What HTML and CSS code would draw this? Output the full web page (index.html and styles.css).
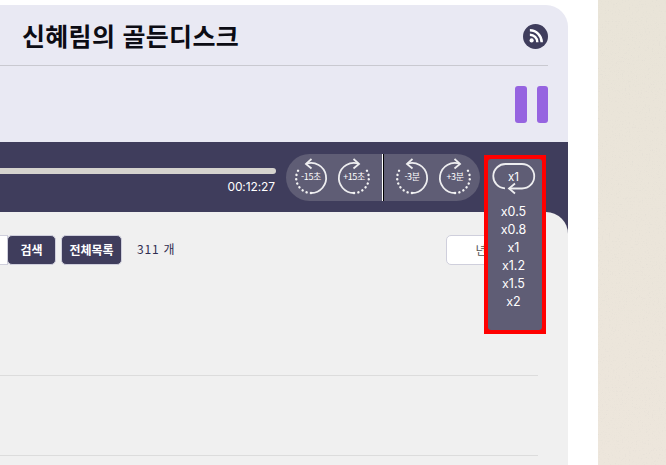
FILE: index.html
```html
<!DOCTYPE html>
<html lang="ko">
<head>
    <meta charset="UTF-8">
    <meta name="viewport" content="width=device-width, initial-scale=1.0">
    <title>신혜림의 골든디스크</title>
    <link rel="stylesheet" href="styles.css">
</head>
<body>
    <svg class="defs" width="0" height="0">
        <symbol id="ringBack" viewBox="0 0 36 40">
            <path class="ring" d="M13 7.9 A15 15 0 1 1 18 37"/>
            <path class="ring" d="M18.5 3 L13 7.9 L18.5 12.5"/>
            <path class="dots" d="M18 37 A15 15 0 0 1 7 12"/>
        </symbol>
        <symbol id="ringFwd" viewBox="0 0 36 40">
            <path class="ring" d="M23 7.9 A15 15 0 1 0 18 37"/>
            <path class="ring" d="M17.5 3 L23 7.9 L17.5 12.5"/>
            <path class="dots" d="M18 37 A15 15 0 0 0 29 12"/>
        </symbol>
        <filter id="paper">
            <feTurbulence type="fractalNoise" baseFrequency="0.7" numOctaves="2" seed="4"/>
            <feColorMatrix values="0 0 0 0 0.55  0 0 0 0 0.55  0 0 0 0 0.55  0 0 0 1.6 -0.95"/>
        </filter>
    </svg>

    <div class="page">
        <div class="panel">
            <div class="header">
                <h1 class="title">신혜림의 골든디스크</h1>
                <a class="rss">
                    <svg width="14" height="14" viewBox="0 0 16 16">
                        <circle cx="3" cy="13" r="2.4" fill="#fff"/>
                        <path d="M1 6.5 A8.5 8.5 0 0 1 9.5 15" class="rss-arc"/>
                        <path d="M1 1.5 A13.5 13.5 0 0 1 14.5 15" class="rss-arc"/>
                    </svg>
                </a>
            </div>
            <div class="now">
                <div class="pause"><span></span><span></span></div>
            </div>
            <div class="player">
                <div class="progress-wrap">
                    <div class="progress"></div>
                    <div class="time">00:12:27</div>
                </div>
                <div class="skips">
                    <div class="pill pill-left">
                        <div class="skip"><svg><use href="#ringBack"/></svg><span>-15초</span></div>
                        <div class="skip"><svg><use href="#ringFwd"/></svg><span>+15초</span></div>
                    </div>
                    <div class="pill pill-right">
                        <div class="skip"><svg><use href="#ringBack"/></svg><span>-3분</span></div>
                        <div class="skip"><svg><use href="#ringFwd"/></svg><span>+3분</span></div>
                    </div>
                </div>
                <div class="speed">
                    <div class="speed-inner">
                        <div class="speed-now">
                            <svg width="44" height="34" viewBox="0 0 44 34">
                                <path class="ring" d="M17 27.5 H30 A12.2 12.2 0 0 0 30 3 H14 A12.2 12.2 0 0 0 13 27.4"/>
                                <path class="ring" d="M23 22.5 L17 27.5 L23 32.5"/>
                            </svg>
                            <span>x1</span>
                        </div>
                        <ul class="speed-list">
                            <li>x0.5</li>
                            <li>x0.8</li>
                            <li>x1</li>
                            <li>x1.2</li>
                            <li>x1.5</li>
                            <li>x2</li>
                        </ul>
                    </div>
                </div>
            </div>
            <div class="lower">
                <div class="content">
                    <div class="toolbar">
                        <div class="search-input"></div>
                        <button class="btn btn-search">검색</button>
                        <button class="btn btn-all">전체목록</button>
                        <span class="count">311 개</span>
                        <button class="btn-year">년도별</button>
                    </div>
                    <div class="rows">
                        <div class="row"></div>
                        <div class="row"></div>
                    </div>
                </div>
            </div>
        </div>
        <div class="side">
            <svg class="paper" width="68" height="465"><rect width="68" height="465" filter="url(#paper)"/></svg>
        </div>
    </div>
</body>
</html>
```

FILE: styles.css
```css
html, body {
    margin: 0;
    height: 100%;
    overflow: hidden;
    background: #fff;
}
body {
    font-family: "Noto Sans CJK KR", "Noto Sans", sans-serif;
}
.defs {
    display: block;
    height: 0;
}
.page {
    display: flex;
    height: 465px;
}
.panel {
    width: 568px;
    margin-top: 5px;
    background: #e9e9f3;
    border-top-right-radius: 22px;
    display: flex;
    flex-direction: column;
}
.side {
    width: 68px;
    margin-left: 30px;
    background: linear-gradient(#e9e4d8, #ede6dc);
}
.paper {
    display: block;
    opacity: 0.35;
}

/* header */
.header {
    height: 60px;
    margin-right: 20px;
    padding-left: 22px;
    border-bottom: 1px solid #c9c9d0;
    display: flex;
    justify-content: space-between;
    align-items: center;
}
.title {
    margin: 0;
    font-size: 25px;
    font-weight: 700;
    letter-spacing: 0.3px;
    color: #0c0c14;
}
.rss {
    width: 25px;
    height: 25px;
    margin-top: 2px;
    border-radius: 50%;
    background: #3f3d5c;
    display: flex;
    justify-content: center;
    align-items: center;
}
.rss-arc {
    fill: none;
    stroke: #fff;
    stroke-width: 2.8;
}
.now {
    height: 76px;
    margin-right: 20px;
    display: flex;
    justify-content: flex-end;
    align-items: center;
}
.pause {
    display: flex;
    gap: 10px;
    margin-top: 1px;
}
.pause span {
    width: 11.5px;
    height: 37px;
    border-radius: 3px;
    background: #9664e0;
}

/* player bar */
.player {
    position: relative;
    height: 70px;
    background: #3f3d5c;
    display: flex;
    align-items: flex-start;
}
.progress-wrap {
    width: 276px;
    padding-top: 26px;
}
.progress {
    height: 6px;
    border-radius: 0 3px 3px 0;
    background: #d5d3ce;
}
.time {
    margin-top: 5px;
    padding-right: 1px;
    text-align: right;
    font-family: Inter, "Noto Sans", sans-serif;
    font-size: 12px;
    letter-spacing: -0.1px;
    line-height: 16px;
    color: #fff;
}
.skips {
    display: flex;
    margin: 12px 0 0 10px;
    background: linear-gradient(to right, transparent 96px, #fff 96px, #fff 97px, #000 97px, #000 98px, transparent 98px);
}
.pill {
    width: 96px;
    height: 47px;
    box-sizing: border-box;
    background: #5f5d75;
    display: flex;
    gap: 7px;
    align-items: flex-start;
}
.pill-left {
    padding: 2px 0 0 7px;
    border-radius: 24px 0 0 24px;
    margin-right: 2px;
}
.pill-right {
    padding: 2px 0 0 10px;
    border-radius: 0 24px 24px 0;
}
.skip {
    position: relative;
    width: 36px;
    height: 40px;
}
.skip svg {
    width: 36px;
    height: 40px;
    display: block;
}
.skip span {
    position: absolute;
    left: 0;
    right: 0;
    top: 15px;
    text-align: center;
    font-size: 9px;
    line-height: 12px;
    letter-spacing: -0.4px;
    color: #fff;
}
.ring {
    fill: none;
    stroke: #eeeef0;
    stroke-width: 1.8;
}
.dots {
    fill: none;
    stroke: #f2f2f2;
    stroke-width: 2.4;
    stroke-linecap: round;
    stroke-dasharray: 0.1 4.3;
}

/* speed menu */
.speed {
    position: absolute;
    left: 484px;
    top: 13px;
    z-index: 2;
    width: 62px;
    height: 179px;
    box-sizing: border-box;
    padding: 4px;
    background: #f00;
}
.speed-inner {
    height: 100%;
    padding-right: 3px;
    box-sizing: border-box;
    border-radius: 3px;
    background: #5f5d75;
    color: #fff;
    font-family: Inter, "Noto Sans", sans-serif;
    font-size: 12.5px;
    text-align: center;
}
.speed-now {
    position: relative;
    height: 44px;
    display: flex;
    justify-content: center;
    padding-top: 2px;
    box-sizing: border-box;
}
.speed-now span {
    position: absolute;
    left: 0;
    right: 0;
    top: 10px;
    font-size: 11.5px;
    line-height: 16px;
}
.speed-list {
    margin: 0;
    padding: 0;
    list-style: none;
}
.speed-list li {
    height: 18px;
    line-height: 18px;
}

/* list */
.lower {
    flex: 1;
    background: #3f3d5c;
}
.content {
    height: 100%;
    background: #f0f0f0;
    border-top-right-radius: 22px;
}
.toolbar {
    height: 30px;
    padding-top: 23px;
    margin-right: 30px;
    display: flex;
    align-items: center;
}
.search-input {
    width: 7px;
    height: 28px;
    background: #fff;
    border: 1px solid #cfcfdc;
    border-left: none;
    margin-right: -1px;
}
.btn {
    height: 30px;
    padding: 0 0 2px;
    border: 1px solid #cfcfdc;
    border-radius: 5px;
    background: #3f3d5c;
    color: #fff;
    font-family: inherit;
    font-size: 12px;
    font-weight: 700;
}
.btn-search {
    width: 49px;
}
.btn-all {
    width: 61px;
    margin-left: 5px;
}
.count {
    margin-left: 15px;
    padding-bottom: 3px;
    font-size: 12px;
    letter-spacing: 0.8px;
    color: #2f2d50;
}
.btn-year {
    width: 92px;
    height: 30px;
    margin-left: auto;
    padding: 0 0 2px;
    border: 1px solid #cfcfdc;
    border-radius: 5px;
    background: #fff;
    color: #555;
    font-family: inherit;
    font-size: 12px;
}
.rows {
    margin: 31px 30px 0 0;
}
.row {
    height: 79px;
    border-bottom: 1px solid #dcdcdc;
}
```
